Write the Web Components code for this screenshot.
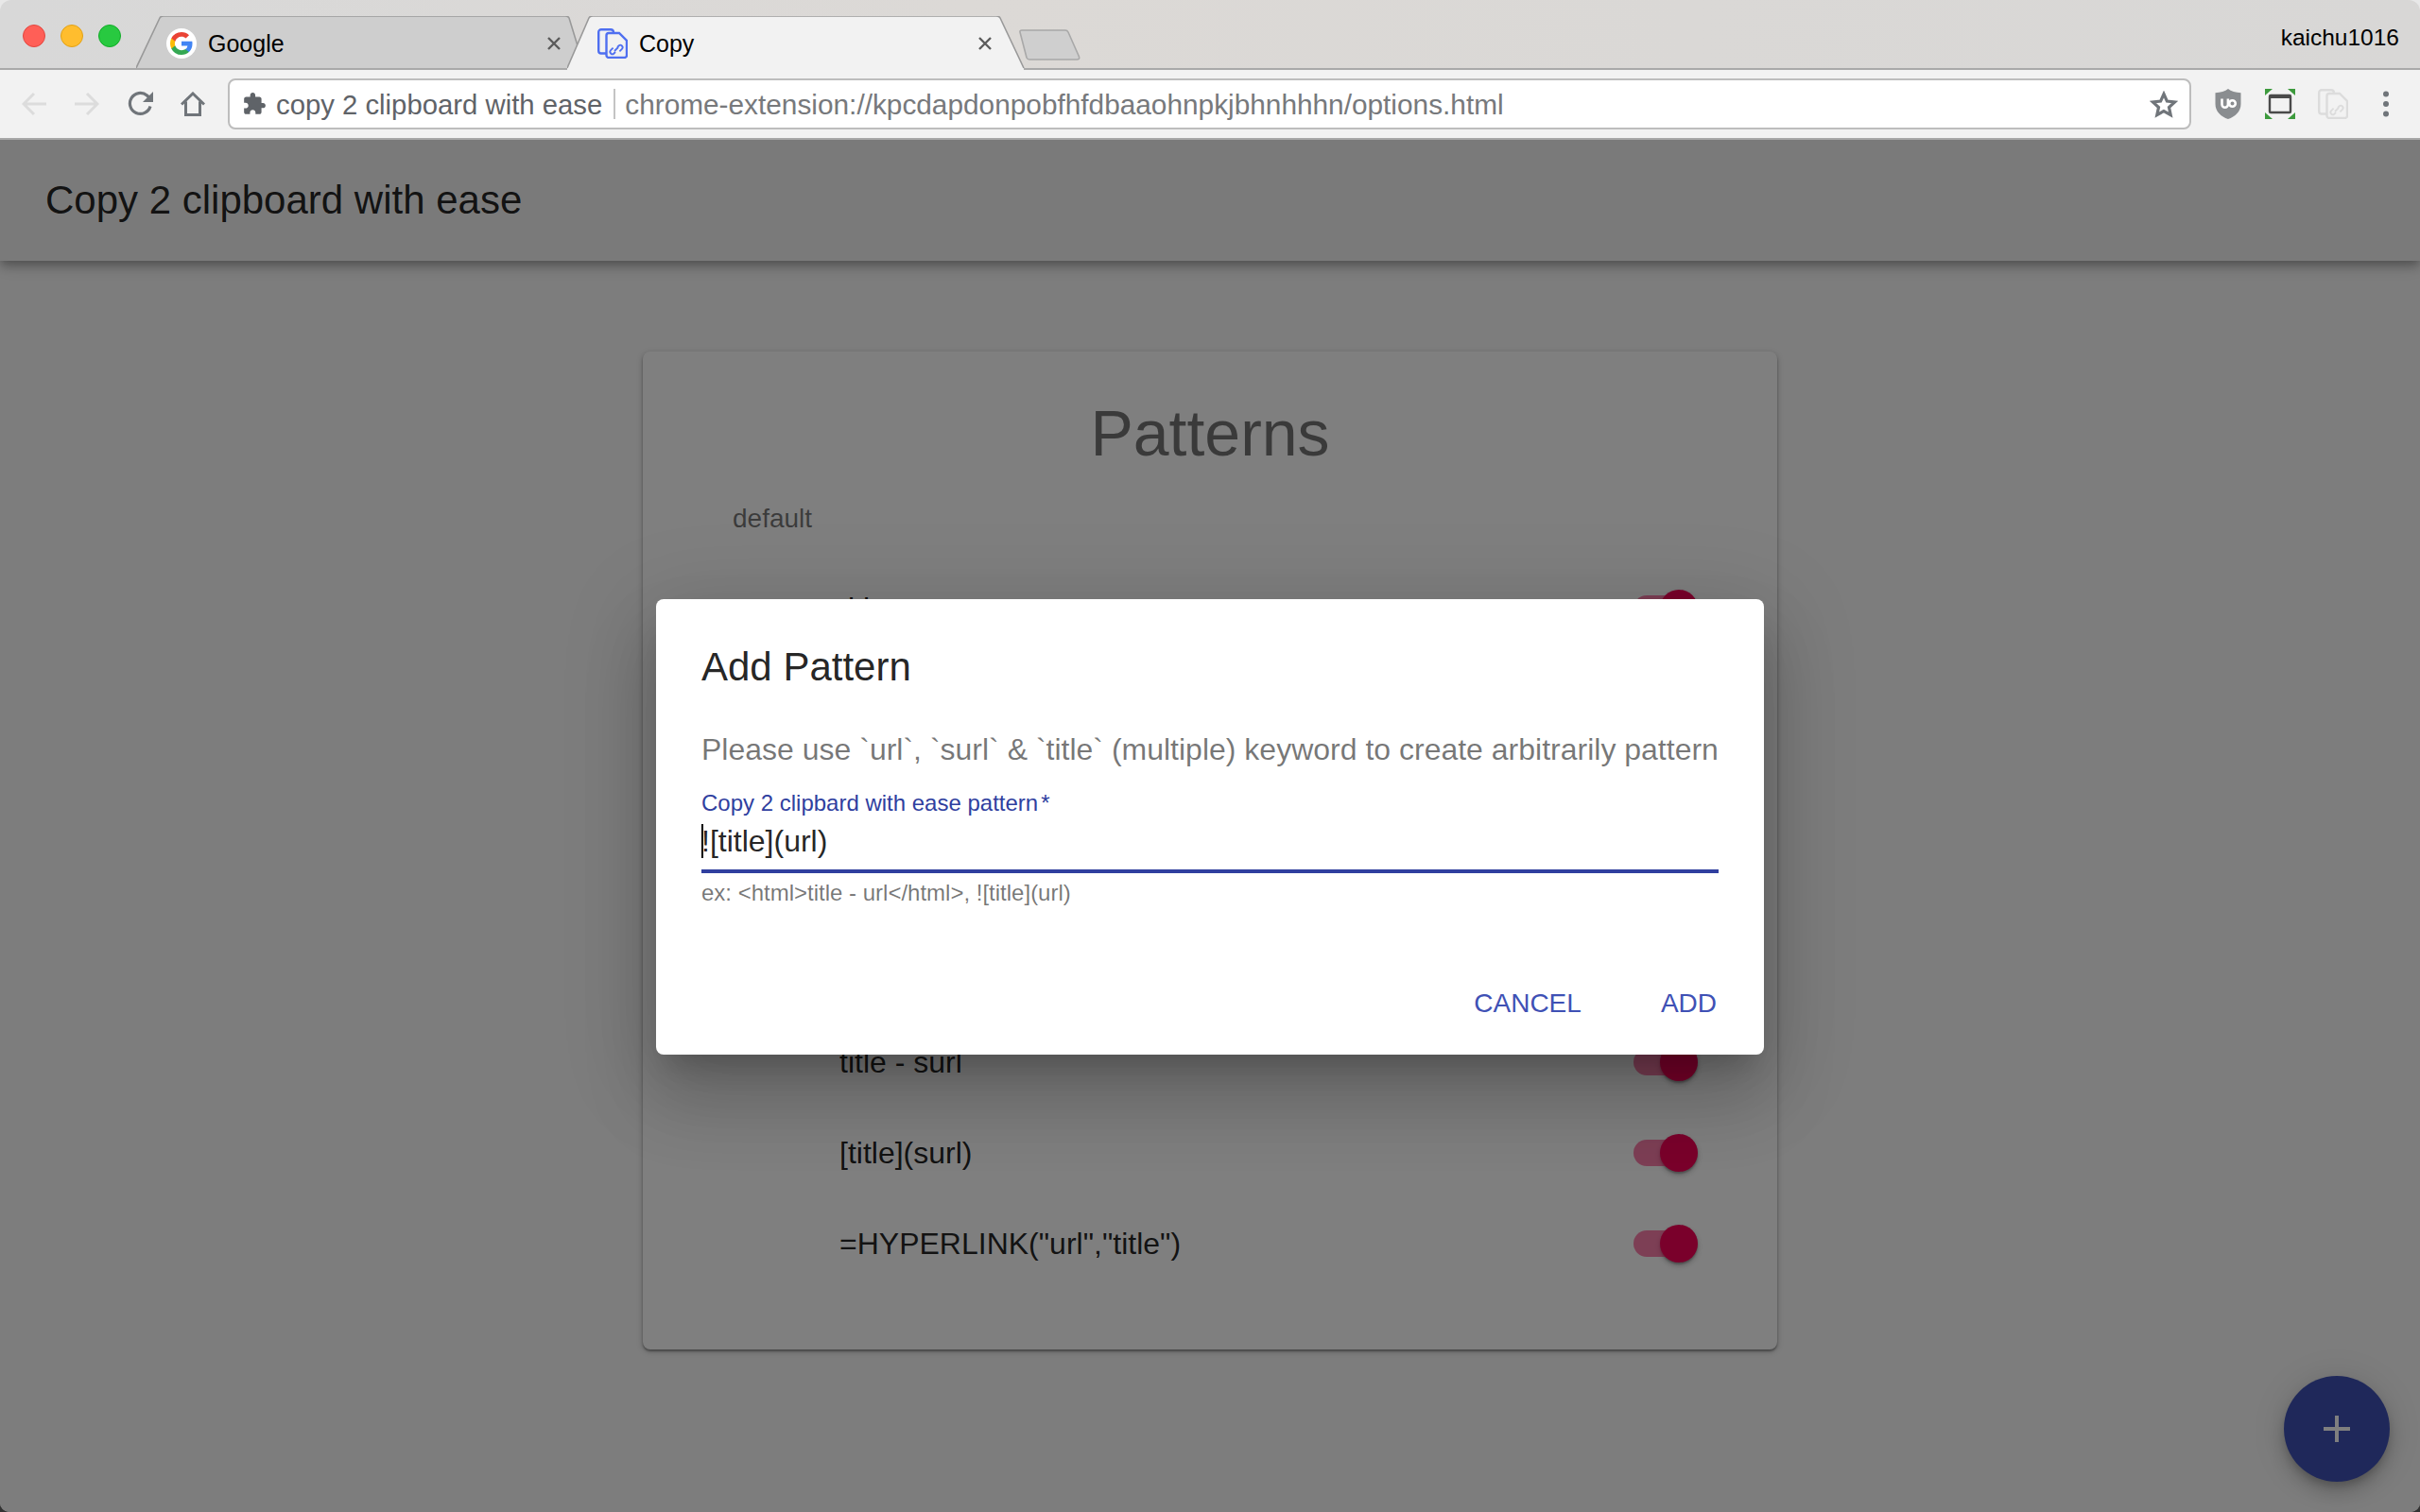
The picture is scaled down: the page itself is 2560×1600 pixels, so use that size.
<!DOCTYPE html>
<html>
<head>
<meta charset="utf-8">
<title>Copy</title>
<style>
  html, body { margin: 0; height: 100%; background: linear-gradient(#e8e8e8 50%, #333 50%); }
  body { font-family: "Liberation Sans", Arial, sans-serif; overflow: hidden; }
</style>
</head>
<body>
<browser-window>
  <browser-tab slot="tabs" width="469" close="19">
    <svg slot="icon" width="32" height="32" viewBox="0 0 32 32">
      <circle cx="16" cy="16" r="16" fill="#fff"/>
      <g transform="translate(4 4) scale(1.333)">
        <path fill="#4285F4" d="M17.64 9.2c0-.637-.057-1.251-.164-1.84H9v3.481h4.844a4.14 4.14 0 0 1-1.796 2.716v2.259h2.908c1.702-1.567 2.684-3.875 2.684-6.615z"/>
        <path fill="#34A853" d="M9 18c2.43 0 4.467-.806 5.956-2.18l-2.908-2.259c-.806.54-1.837.86-3.048.86-2.344 0-4.328-1.584-5.036-3.711H.957v2.332A8.997 8.997 0 0 0 9 18z"/>
        <path fill="#FBBC05" d="M3.964 10.71A5.41 5.41 0 0 1 3.682 9c0-.593.102-1.17.282-1.71V4.958H.957A8.996 8.996 0 0 0 0 9c0 1.452.348 2.827.957 4.042l3.007-2.332z"/>
        <path fill="#EA4335" d="M9 3.58c1.321 0 2.508.454 3.44 1.345l2.582-2.58C13.463.891 11.426 0 9 0A8.997 8.997 0 0 0 .957 4.958L3.964 7.29C4.672 5.163 6.656 3.58 9 3.58z"/>
      </g>
    </svg>
    Google
  </browser-tab>
  <browser-tab slot="tabs" width="484" close="34" active>
    <svg slot="icon" width="32" height="32" viewBox="0 0 32 32" fill="none" stroke="#4f6ff0" stroke-width="2.4">
      <path d="M10 26.5H4a2.8 2.8 0 0 1-2.8-2.8V4A2.8 2.8 0 0 1 4 1.2h10a3 3 0 0 1 3 2.8"/>
      <path fill="#f2f2f2" d="M12 5h11l8 8v15.5a2.5 2.5 0 0 1-2.5 2.5H12a2.5 2.5 0 0 1-2.5-2.5V7.5A2.5 2.5 0 0 1 12 5z"/>
      <path stroke-width="1.8" d="M19 25l-1.5 1.5a2.4 2.4 0 0 1-3.4-3.4l2.5-2.5M21 20l1.5-1.5a2.4 2.4 0 0 1 3.4 3.4l-2.5 2.5M18 24l4-4"/>
    </svg>
    Copy
  </browser-tab>
  <new-tab slot="tabs"></new-tab>
  <span slot="user">kaichu1016</span>

  <tool-icon slot="nav" gap="30">
    <svg width="26" height="26" viewBox="0 0 26 26" fill="none" stroke="#dcdcdc" stroke-width="3"><path d="M26 13H2M13 2L2 13l11 11"/></svg>
  </tool-icon>
  <tool-icon slot="nav" gap="30">
    <svg width="26" height="26" viewBox="0 0 26 26" fill="none" stroke="#dcdcdc" stroke-width="3"><path d="M0 13h24M13 2l11 11-11 11"/></svg>
  </tool-icon>
  <tool-icon slot="nav" gap="28">
    <svg width="28" height="28" viewBox="0 0 28 28" fill="none" stroke="#70757a" stroke-width="3.2"><path d="M24 16.5A11 11 0 1 1 20.5 5L25 9"/><path fill="#70757a" stroke="none" d="M27 1v11H16z"/></svg>
  </tool-icon>
  <tool-icon slot="nav" gap="24">
    <svg width="26" height="26" viewBox="0 0 26 26" fill="none" stroke="#70757a" stroke-width="3"><path d="M1 13.5L13 2l12 11.5M5.5 10.5V24.5h15V10.5"/></svg>
  </tool-icon>

  <svg slot="site-icon" width="26" height="26" viewBox="0 0 24 24" fill="#5f6368"><path d="M20.5 11H19V7c0-1.1-.9-2-2-2h-4V3.5C13 2.12 11.88 1 10.5 1S8 2.12 8 3.5V5H4c-1.1 0-1.99.9-1.99 2v3.8H3.5c1.49 0 2.7 1.21 2.7 2.7s-1.21 2.7-2.7 2.7H2V20c0 1.1.9 2 2 2h3.8v-1.5c0-1.49 1.21-2.7 2.7-2.7 1.49 0 2.7 1.21 2.7 2.7V22H17c1.1 0 2-.9 2-2v-4h1.5c1.38 0 2.5-1.12 2.5-2.5S21.88 11 20.5 11z"/></svg>
  <span slot="site">copy 2 clipboard with ease</span>
  <span slot="url">chrome-extension://kpcdapdonpobfhfdbaaohnpkjbhnhhhn/options.html</span>
  <svg slot="star" width="30" height="29" viewBox="0 0 30 29" fill="none" stroke="#70757a" stroke-width="3.2" stroke-linejoin="miter"><path d="M15 3.5l3.4 7.6 8.2.9-6.1 5.5 1.7 8.1-7.2-4.1-7.200 4.100 1.700-8.100L3.400 12l8.200-.9z"/></svg>

  <svg slot="tools" width="30" height="32" viewBox="-1 0 30 32">
    <path fill="#8a8d90" d="M14 0c3 2.5 8 4 13.5 4.3V16c0 8-6 13.5-13.5 16C6.5 29.5.5 24 .5 16V4.3C6 4 11 2.500 14 0z"/>
    <g fill="none" stroke="#fff" stroke-width="2.6"><path d="M7.5 10.5v6a3.2 3.2 0 0 0 6.400 0v-6"/><circle cx="18.5" cy="15.5" r="3.3"/></g>
  </svg>
  <svg slot="tools" width="32" height="32" viewBox="0 0 32 32">
    <g fill="#3c9a3c"><path d="M0 0h8L0 7z"/><path d="M32 0h-8l8 7z"/><path d="M0 32h8l-8-7z"/><path d="M32 32h-8l8-7z"/></g>
    <rect x="5" y="7" width="22" height="18" rx="1" fill="none" stroke="#4a4a4a" stroke-width="2.4"/>
    <path d="M5 7h22v3H5z" fill="#4a4a4a"/>
  </svg>
  <svg slot="tools" width="32" height="32" viewBox="0 0 32 32" fill="none" stroke="#dcdcdc" stroke-width="2.4">
    <path d="M10 26.5H4a2.8 2.8 0 0 1-2.8-2.8V4A2.8 2.8 0 0 1 4 1.2h10a3 3 0 0 1 3 2.8"/>
    <path fill="#f2f2f2" d="M12 5h11l8 8v15.5a2.5 2.5 0 0 1-2.5 2.5H12a2.5 2.5 0 0 1-2.5-2.5V7.5A2.5 2.5 0 0 1 12 5z"/>
    <path stroke-width="1.8" d="M19 25l-1.5 1.5a2.4 2.4 0 0 1-3.4-3.4l2.5-2.5M21 20l1.5-1.5a2.4 2.4 0 0 1 3.4 3.4l-2.5 2.5M18 24l4-4"/>
  </svg>
  <svg slot="tools" width="32" height="28" viewBox="0 0 32 28" fill="#70757a"><circle cx="16" cy="3.5" r="3"/><circle cx="16" cy="14" r="3"/><circle cx="16" cy="24.5" r="3"/></svg>

  <app-page>
    <span slot="title">Copy 2 clipboard with ease</span>
    <pattern-card>
      <span slot="heading">Patterns</span>
      <span slot="label">default</span>
      <pattern-row>title</pattern-row>
      <pattern-row></pattern-row>
      <pattern-row></pattern-row>
      <pattern-row></pattern-row>
      <pattern-row></pattern-row>
      <pattern-row>title - surl</pattern-row>
      <pattern-row>[title](surl)</pattern-row>
      <pattern-row>=HYPERLINK("url","title")</pattern-row>
    </pattern-card>
    <fab-button slot="fab"></fab-button>
    <add-dialog slot="dialog">
      <span slot="title">Add Pattern</span>
      <span slot="text">Please use `url`, `surl` &amp; `title` (multiple) keyword to create arbitrarily pattern</span>
      <pattern-field label="Copy 2 clipbard with ease pattern" value="![title](url)" hint="ex: &lt;html&gt;title - url&lt;/html&gt;, ![title](url)"></pattern-field>
      <span slot="action">CANCEL</span>
      <span slot="action">ADD</span>
    </add-dialog>
  </app-page>
</browser-window>

<script>
class BrowserWindow extends HTMLElement {
  constructor () {
    super()
    this.attachShadow({ mode: 'open' }).innerHTML = `
      <style>
        :host { display: flex; flex-direction: column; width: 2560px; height: 1600px; overflow: hidden; border-radius: 12px 12px 10px 10px; color: #000; }
        .strip { display: flex; align-items: flex-end; height: 72px; border-bottom: 2px solid #a9a9a9; background: linear-gradient(90deg, #d8d8d8, #dcd9d6 40%, #d8d7d6); }
        .lights { display: flex; gap: 16px; align-self: flex-start; margin: 26px 16px 0 24px; }
        .lights i { width: 22px; height: 22px; border-radius: 50%; border: 1px solid; }
        .tabs { display: flex; align-items: flex-end; flex: 1; }
        .user { align-self: flex-start; margin: 25px 22px 0 0; font-size: 24.5px; line-height: 30px; }
        .bar { display: flex; align-items: center; height: 72px; border-bottom: 2px solid #a8a8a8; background: #f2f2f2; }
        .nav { display: flex; align-items: center; padding-left: 23px; }
        .omni { display: flex; align-items: center; width: 2073px; height: 50px; border: 2px solid #bdbdbd; border-radius: 8px; background: #fff; font-size: 29.3px; }
        .site-icon { display: flex; margin-left: 13px; }
        .site { margin-left: 10px; padding-top: 2px; color: #5f6368; white-space: nowrap; }
        .sep { width: 2px; height: 32px; margin: 0 10px 0 12px; background: #c4c4c4; }
        .url { flex: 1; padding-top: 2px; font-size: 29.8px; color: #77797c; white-space: nowrap; }
        .star { display: flex; margin-right: 12px; }
        .tools { display: flex; align-items: center; flex: 1; padding-left: 23.5px; gap: 24px; }
        ::slotted(svg[slot=tools]) { flex: none; }
        .body { flex: 1; min-height: 0; display: flex; }
      </style>
      <div class="strip">
        <div class="lights">
          <i style="background:#ff5f57;border-color:#e2463f"></i>
          <i style="background:#ffbd2e;border-color:#e1a116"></i>
          <i style="background:#28c940;border-color:#12ac28"></i>
        </div>
        <div class="tabs"><slot name="tabs"></slot></div>
        <div class="user"><slot name="user"></slot></div>
      </div>
      <div class="bar">
        <div class="nav"><slot name="nav"></slot></div>
        <div class="omni">
          <div class="site-icon"><slot name="site-icon"></slot></div>
          <div class="site"><slot name="site"></slot></div>
          <div class="sep"></div>
          <div class="url"><slot name="url"></slot></div>
          <div class="star"><slot name="star"></slot></div>
        </div>
        <div class="tools"><slot name="tools"></slot></div>
      </div>
      <div class="body"><slot></slot></div>
    `
  }
}

class BrowserTab extends HTMLElement {
  constructor () {
    super()
    this._shadowRoot = this.attachShadow({ mode: 'open' })
  }

  connectedCallback () {
    const w = Number(this.getAttribute('width'))
    const active = this.hasAttribute('active')
    const edge = active
      ? `M0 55L23 2Q24 0 27 0H${w - 30}Q${w - 27} 0 ${w - 26} 2L${w - 1} 55`
      : `M0 55L25 2Q26 0 29 0H${w - 15}Q${w - 12} 0 ${w - 11} 2L${w} 38V55`
    this._shadowRoot.innerHTML = `
      <style>
        :host { display: grid; flex: none; width: ${w}px; height: ${active ? 57 : 55}px; font-size: 25px; color: #000; position: relative; z-index: ${active ? 2 : 1}; margin: 0 0 ${active ? -2 : 0}px ${active ? -13 : 0}px; }
        svg.shape, .row { grid-area: 1 / 1; }
        .row { display: flex; align-items: center; box-sizing: border-box; padding: 3px ${this.getAttribute('close')}px 0 32px; gap: 12px; height: 55px; }
        .icon { display: flex; }
        .close { margin-left: auto; display: flex; }
      </style>
      <svg class="shape" width="${w}" height="${active ? 57 : 55}" viewBox="0 0 ${w} ${active ? 57 : 55}">
        ${active ? `<path d="M0 57V55L23 2Q24 0 27 0H${w - 30}Q${w - 27} 0 ${w - 26} 2L${w - 1} 55V57z" fill="#f2f2f2"/>` : `<path d="${edge}z" fill="#cecece"/>`}
        <path d="${edge}" fill="none" stroke="#999" stroke-width="1.6"/>
      </svg>
      <div class="row">
        <div class="icon"><slot name="icon"></slot></div>
        <div class="title"><slot></slot></div>
        <div class="close">
          <svg width="16" height="16" viewBox="0 0 16 16" stroke="#5b5b5b" stroke-width="2.4"><path d="M2 2l12 12M14 2L2 14"/></svg>
        </div>
      </div>
    `
  }
}

class NewTab extends HTMLElement {
  constructor () {
    super()
    this.attachShadow({ mode: 'open' }).innerHTML = `
      <style>
        :host { display: flex; margin: 0 0 8px -7px; }
      </style>
      <svg width="66" height="33" viewBox="0 0 66 33">
        <path d="M2 3Q1.5 1 4 1H50Q52 1 53 3L64.5 29Q65.5 32 62 32H12Q10 32 9 30z" fill="#cfcfcf" stroke="#a8a8a8" stroke-width="1.6"/>
      </svg>
    `
  }
}

class ToolIcon extends HTMLElement {
  constructor () {
    super()
    this.attachShadow({ mode: 'open' }).innerHTML = `
      <style>
        :host { display: flex; }
      </style>
      <slot></slot>
    `
  }

  connectedCallback () {
    this.style.marginRight = this.getAttribute('gap') + 'px'
  }
}

class AppPage extends HTMLElement {
  constructor () {
    super()
    this.attachShadow({ mode: 'open' }).innerHTML = `
      <style>
        :host { display: block; flex: 1; position: relative; background: #fafafa; overflow: hidden; }
        header { display: flex; align-items: center; height: 128px; padding-left: 48px; background: #f5f5f5; font-size: 42px; color: rgba(0,0,0,.87); box-shadow: 0 4px 8px -2px rgba(0,0,0,.2), 0 8px 10px 0 rgba(0,0,0,.14), 0 2px 20px 0 rgba(0,0,0,.12); position: relative; }
        main { display: flex; justify-content: center; padding-top: 96px; }
        .fab { position: absolute; right: 32px; bottom: 32px; }
        .scrim { position: absolute; inset: 0; display: flex; align-items: center; justify-content: center; background: rgba(0,0,0,.5); }
      </style>
      <header><slot name="title"></slot></header>
      <main><slot></slot></main>
      <div class="fab"><slot name="fab"></slot></div>
      <div class="scrim"><slot name="dialog"></slot></div>
    `
  }
}

class PatternCard extends HTMLElement {
  constructor () {
    super()
    this.attachShadow({ mode: 'open' }).innerHTML = `
      <style>
        :host { display: block; width: 1200px; height: 1056px; box-sizing: border-box; padding-top: 46px; background: #fff; border-radius: 8px; box-shadow: 0 2px 2px rgba(0,0,0,.3), 0 2px 6px rgba(0,0,0,.25); }
        h1 { margin: 0; font-size: 68px; line-height: 80px; font-weight: 400; text-align: center; color: rgba(0,0,0,.54); }
        .label { margin: 35px 0 31px 95px; font-size: 28px; line-height: 32px; color: rgba(0,0,0,.54); }
      </style>
      <h1><slot name="heading"></slot></h1>
      <div class="label"><slot name="label"></slot></div>
      <slot></slot>
    `
  }
}

class PatternRow extends HTMLElement {
  constructor () {
    super()
    this.attachShadow({ mode: 'open' }).innerHTML = `
      <style>
        :host { display: flex; align-items: center; justify-content: space-between; height: 96px; padding: 0 84px 0 208px; font-size: 32px; color: rgba(0,0,0,.87); }
      </style>
      <div><slot></slot></div>
      <pattern-toggle></pattern-toggle>
    `
  }
}

class PatternToggle extends HTMLElement {
  constructor () {
    super()
    this.attachShadow({ mode: 'open' }).innerHTML = `
      <style>
        :host { display: grid; align-items: center; width: 68px; height: 40px; }
        .track, .thumb { grid-area: 1 / 1; }
        .track { justify-self: start; width: 56px; height: 28px; border-radius: 14px; background: #f50057; opacity: .5; }
        .thumb { justify-self: end; width: 40px; height: 40px; border-radius: 50%; background: #f50057; box-shadow: 0 2px 2px rgba(0,0,0,.24), 0 3px 6px rgba(0,0,0,.24); }
      </style>
      <div class="track"></div>
      <div class="thumb"></div>
    `
  }
}

class FabButton extends HTMLElement {
  constructor () {
    super()
    this.attachShadow({ mode: 'open' }).innerHTML = `
      <style>
        :host { display: flex; align-items: center; justify-content: center; width: 112px; height: 112px; border-radius: 50%; background: #3f51b5; box-shadow: 0 6px 10px -2px rgba(0,0,0,.2), 0 12px 20px 0 rgba(0,0,0,.14), 0 2px 36px 0 rgba(0,0,0,.12); }
      </style>
      <svg width="28" height="28" viewBox="0 0 28 28" fill="#fff"><path d="M12 0h4v12h12v4H16v12h-4V16H0v-4h12z"/></svg>
    `
  }
}

class AddDialog extends HTMLElement {
  constructor () {
    super()
    this.attachShadow({ mode: 'open' }).innerHTML = `
      <style>
        :host { display: block; width: 1172px; height: 482px; margin-top: 2px; box-sizing: border-box; padding: 48px 48px 0; background: #fff; border-radius: 8px; box-shadow: 0 22px 30px -14px rgba(0,0,0,.2), 0 48px 76px 6px rgba(0,0,0,.14), 0 18px 92px 16px rgba(0,0,0,.12); }
        h2 { margin: 0; font-size: 42px; line-height: 48px; font-weight: 400; color: rgba(0,0,0,.87); }
        .text { margin-top: 41px; font-size: 32px; line-height: 44px; color: rgba(0,0,0,.54); white-space: nowrap; }
        .actions { display: flex; justify-content: flex-end; gap: 84px; margin-top: 87px; padding-right: 2px; font-size: 28px; line-height: 32px; color: #3f51b5; }
      </style>
      <h2><slot name="title"></slot></h2>
      <div class="text"><slot name="text"></slot></div>
      <slot></slot>
      <div class="actions"><slot name="action"></slot></div>
    `
  }
}

class PatternField extends HTMLElement {
  constructor () {
    super()
    this._shadowRoot = this.attachShadow({ mode: 'open' })
  }

  connectedCallback () {
    this._shadowRoot.innerHTML = `
      <style>
        :host { display: block; margin-top: 21px; }
        label { display: block; font-size: 24px; line-height: 28px; color: #303f9f; }
        label span { margin-left: 3px; }
        .value { display: flex; align-items: center; height: 48px; margin-top: 2px; font-size: 32px; color: rgba(0,0,0,.87); }
        .caret { width: 2px; height: 36px; margin-right: -2px; background: #000; }
        .line { height: 4px; margin-top: 6px; background: #303f9f; }
        .hint { margin-top: 7px; font-size: 24px; line-height: 28px; color: rgba(0,0,0,.54); }
      </style>
      <label>${this.getAttribute('label')}<span>*</span></label>
      <div class="value"><i class="caret"></i><span>${this.getAttribute('value')}</span></div>
      <div class="line"></div>
      <div class="hint">${this.getAttribute('hint').replace(/</g, '&lt;')}</div>
    `
  }
}

customElements.define('browser-window', BrowserWindow)
customElements.define('browser-tab', BrowserTab)
customElements.define('new-tab', NewTab)
customElements.define('tool-icon', ToolIcon)
customElements.define('app-page', AppPage)
customElements.define('pattern-card', PatternCard)
customElements.define('pattern-row', PatternRow)
customElements.define('pattern-toggle', PatternToggle)
customElements.define('fab-button', FabButton)
customElements.define('add-dialog', AddDialog)
customElements.define('pattern-field', PatternField)
</script>
</body>
</html>
